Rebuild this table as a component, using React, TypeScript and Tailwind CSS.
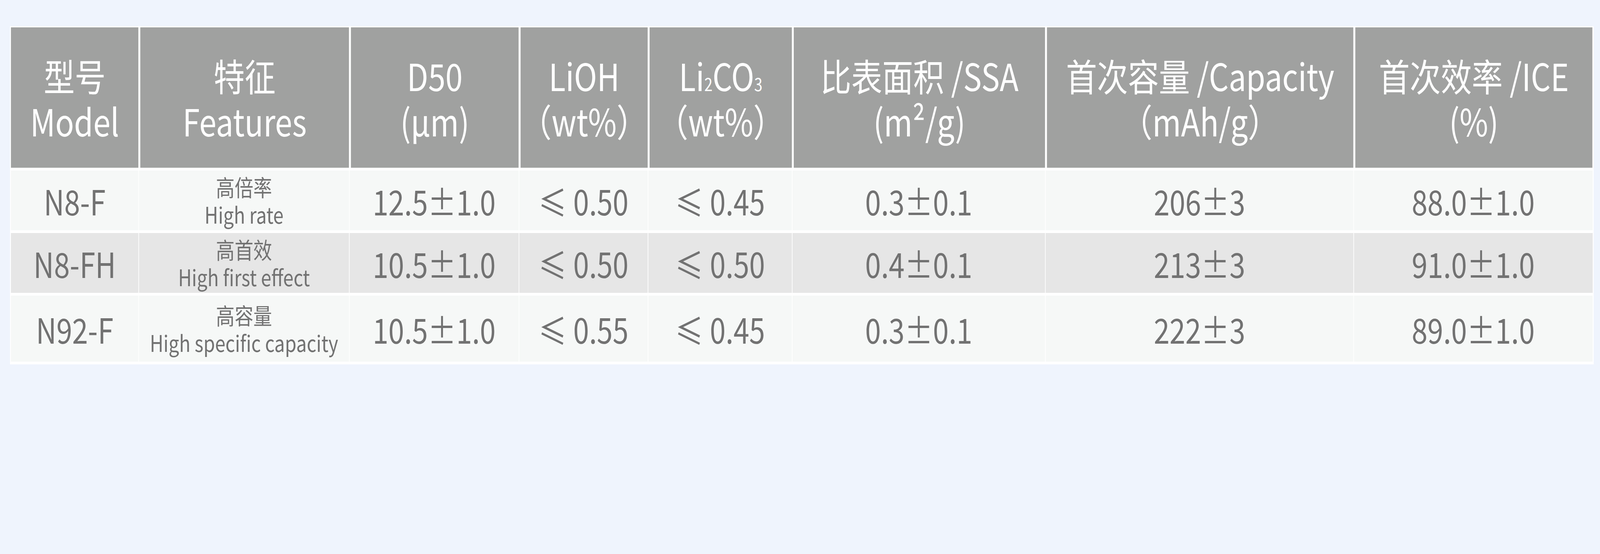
import React from 'react';

type Row = {
  model: string;
  zh: string;
  en: string;
  d50: string;
  lioh: string;
  li2co3: string;
  ssa: string;
  cap: string;
  ice: string;
  bg: string;
  h: string;
};

const rows: Row[] = [
  { model: 'N8-F', zh: '高倍率', en: 'High rate', d50: '12.5±1.0', lioh: '≤ 0.50', li2co3: '≤ 0.45', ssa: '0.3±0.1', cap: '206±3', ice: '88.0±1.0', bg: 'bg-[#f6f8f7]', h: 'h-[153px]' },
  { model: 'N8-FH', zh: '高首效', en: 'High first effect', d50: '10.5±1.0', lioh: '≤ 0.50', li2co3: '≤ 0.50', ssa: '0.4±0.1', cap: '213±3', ice: '91.0±1.0', bg: 'bg-[#e6e6e6]', h: 'h-[153px]' },
  { model: 'N92-F', zh: '高容量', en: 'High specific capacity', d50: '10.5±1.0', lioh: '≤ 0.55', li2co3: '≤ 0.45', ssa: '0.3±0.1', cap: '222±3', ice: '89.0±1.0', bg: 'bg-[#f6f8f7]', h: 'h-[169px]' },
];

const cols = 'grid grid-cols-[395px_653px_526px_400px_447px_785px_956px_741px]';

function Head({ children, first }: { children: React.ReactNode; first?: boolean }) {
  return (
    <div
      className={`flex flex-col items-center justify-center bg-[#a0a1a0] text-center text-[96px] leading-[1.2] text-white ${
        first ? '' : 'border-l-[6px] border-white'
      }`}
    >
      {children}
    </div>
  );
}

function Cell({ children, first }: { children: React.ReactNode; first?: boolean }) {
  return (
    <div
      className={`flex flex-col items-center justify-center text-center text-[88px] leading-[1.2] text-[#727272] ${
        first ? '' : 'border-l-2 border-white'
      }`}
    >
      {children}
    </div>
  );
}

export default function App() {
  return (
    <div
      className="min-h-[1417px] w-full overflow-hidden bg-[#eff4fd]"
      style={{ fontFamily: '"Noto Sans CJK SC", "Noto Sans", sans-serif' }}
    >
      <div className="w-[4961px] origin-top-left scale-x-[0.8257] pt-[67px] pl-[31px]">
        <div className="w-[4910px] bg-white px-[3px] pt-[3px] pb-[7px]">
          {/* header */}
          <div className={`${cols} h-[359px]`}>
            <Head first>
              <span>型号</span>
              <span>Model</span>
            </Head>
            <Head>
              <span>特征</span>
              <span>Features</span>
            </Head>
            <Head>
              <span>D50</span>
              <span>(μm)</span>
            </Head>
            <Head>
              <span>LiOH</span>
              <span>（wt%）</span>
            </Head>
            <Head>
              <span>
                Li<span className="text-[46px]">2</span>CO<span className="text-[46px]">3</span>
              </span>
              <span>（wt%）</span>
            </Head>
            <Head>
              <span>比表面积 /SSA</span>
              <span>(m²/g)</span>
            </Head>
            <Head>
              <span>首次容量 /Capacity</span>
              <span>（mAh/g）</span>
            </Head>
            <Head>
              <span>首次效率 /ICE</span>
              <span>(%)</span>
            </Head>
          </div>

          {/* body */}
          {rows.map((r) => (
            <div key={r.model} className={`${cols} ${r.h} ${r.bg} mt-[7px]`}>
              <Cell first>{r.model}</Cell>
              <Cell>
                <span className="text-[58px] leading-[1.2]">{r.zh}</span>
                <span className="text-[58px] leading-[1.2]">{r.en}</span>
              </Cell>
              <Cell>{r.d50}</Cell>
              <Cell>{r.lioh}</Cell>
              <Cell>{r.li2co3}</Cell>
              <Cell>{r.ssa}</Cell>
              <Cell>{r.cap}</Cell>
              <Cell>{r.ice}</Cell>
            </div>
          ))}
        </div>
      </div>
    </div>
  );
}
